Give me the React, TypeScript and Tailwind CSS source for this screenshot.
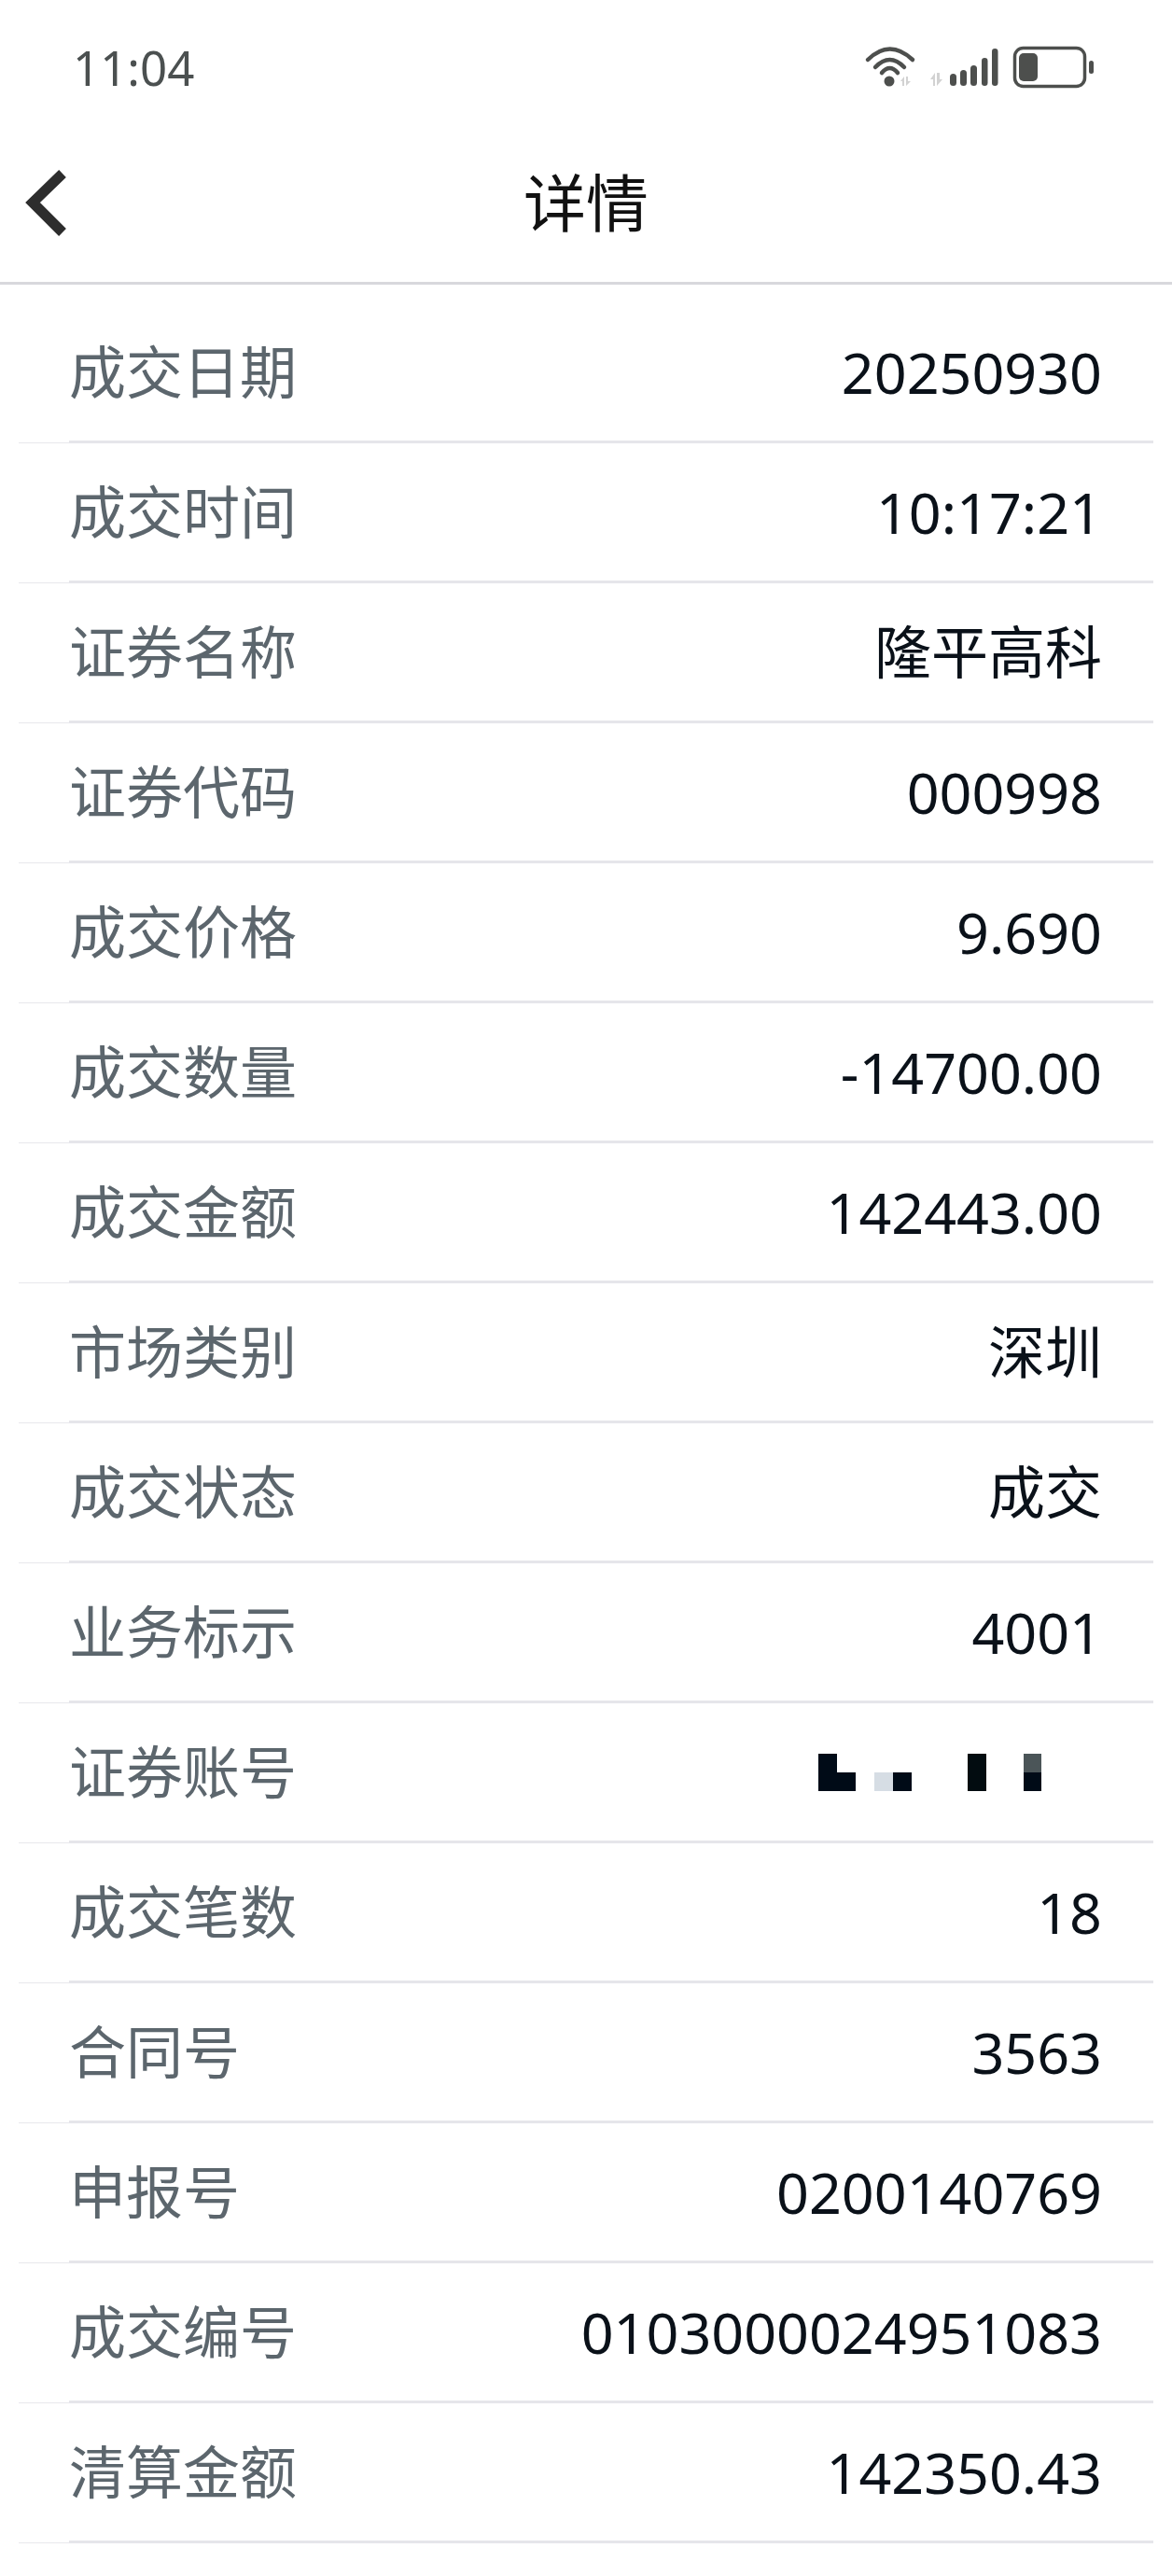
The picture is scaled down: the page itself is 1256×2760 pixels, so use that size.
const rows: [string, string][] = [
  ["成交日期", "20250930"],
  ["成交时间", "10:17:21"],
  ["证券名称", "隆平高科"],
  ["证券代码", "000998"],
  ["成交价格", "9.690"],
  ["成交数量", "-14700.00"],
  ["成交金额", "142443.00"],
  ["市场类别", "深圳"],
  ["成交状态", "成交"],
  ["业务标示", "4001"],
  ["证券账号", ""],
  ["成交笔数", "18"],
  ["合同号", "3563"],
  ["申报号", "0200140769"],
  ["成交编号", "0103000024951083"],
  ["清算金额", "142350.43"],
];

const FONT = "font-['Noto_Sans','Noto_Sans_CJK_SC',sans-serif]";

function StatusIcons() {
  return (
    <svg viewBox="0 0 320 80" className="h-[80px] w-[320px]" aria-hidden="true">
      <g fill="none" stroke="#4d4f4d" strokeLinecap="round" strokeWidth="4.5">
        <path d="M50 34Q73.500 11 98 34" />
        <path d="M58 42Q73.500 26 89 42" />
        <path d="M65 48Q73.500 38 82 48" />
      </g>
      <circle cx="73" cy="57" r="5.500" fill="#4d4f4d" />
      <path d="M85 57l4-5v10h-2v-5zM91 52v10l5-5h-3v-5z" fill="#d2d2d2" />
      <path d="M117 55l5-7v14h-2v-7zM124 48v14l6-7h-3v-7z" fill="#d2d2d2" />
      <g fill="#4d4f4d">
        <rect x="138" y="49" width="7" height="13" rx="3.500" />
        <rect x="149" y="45" width="7" height="17" rx="3.500" />
        <rect x="160" y="40" width="7" height="22" rx="3.500" />
        <rect x="172" y="32" width="6.500" height="30" rx="3.200" />
        <rect x="183" y="22" width="6.500" height="40" rx="3.200" />
        <rect x="212" y="27" width="20" height="30" rx="5" />
        <rect x="287" y="35" width="5" height="14" rx="2.500" />
      </g>
      <rect x="207.500" y="21.500" width="75" height="41" rx="9" fill="none" stroke="#4d4f4d" strokeWidth="3.500" />
    </svg>
  );
}

function Masked() {
  return (
    <svg viewBox="0 0 239 40" className="mr-[65px] h-[40px] w-[239px]" aria-hidden="true">
      <rect x="0" y="0" width="20" height="40" fill="#000b17" />
      <rect x="20" y="20" width="20" height="20" fill="#000b17" />
      <rect x="60" y="20" width="20" height="20" fill="#d6dde4" />
      <rect x="80" y="20" width="20" height="20" fill="#000b17" />
      <rect x="160" y="0" width="20" height="40" fill="#020c10" />
      <rect x="220" y="0" width="19" height="20" fill="#4b5558" />
      <rect x="220" y="20" width="19" height="20" fill="#000b17" />
    </svg>
  );
}

export default function App() {
  return (
    <div className={`flex h-[2760px] w-[1256px] flex-col overflow-hidden bg-white ${FONT}`}>
      <div className="flex h-[140px] items-start justify-between">
        <span className="ml-[78px] mt-[39px] text-[51px] leading-[66px] text-[#4b5050]">11:04</span>
        <div className="mr-[56px] mt-[30px]">
          <StatusIcons />
        </div>
      </div>

      <div className="relative flex h-[165px] items-center justify-center border-b-[3px] border-[#d8d8dc]">
        <svg viewBox="0 0 50 76" className="absolute left-[26px] top-[40px] h-[76px] w-[50px]" aria-hidden="true">
          <path d="M41 6 9 37l32 32" fill="none" stroke="#2d2d2d" strokeWidth="11" />
        </svg>
        <span className="mt-[-8px] text-[67px] leading-[88px] text-[#111]">详情</span>
      </div>

      <div className="flex flex-col pt-[20px]">
        {rows.map(([label, value]) => (
          <div key={label} className="flex h-[150px] flex-col">
            <div className="flex flex-1 items-center justify-between pl-[74px] pr-[75px]">
              <span className="text-[61px] leading-[80px] text-[#5c666d]">{label}</span>
              {value ? (
                <span className="text-[61px] leading-[80px] text-[#0a1119]">{value}</span>
              ) : (
                <Masked />
              )}
            </div>
            <div className="ml-[20px] mr-[20px] flex items-end">
              <div className="h-[1px] w-[54px] bg-[#e8e8ec]" />
              <div className="h-[3px] flex-1 bg-[#e6e6ea]" />
            </div>
          </div>
        ))}
      </div>
    </div>
  );
}
